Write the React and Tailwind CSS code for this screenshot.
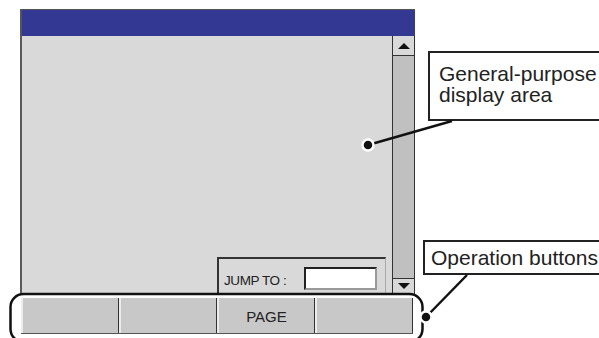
import React from 'react';

const Tri = ({ down }) => (
  <svg width="14" height="8" viewBox="0 0 14 8">
    <polygon points={down ? '1,1 13,1 7,7' : '1,7 13,7 7,1'} fill="#111" />
  </svg>
);

export default function App() {
  const buttons = ['', '', 'PAGE', ''];

  return (
    <div className="relative w-[599px] h-[338px] bg-white overflow-hidden font-['Liberation_Sans',Arial,sans-serif] text-[#222]">
      <div className="pt-[9px] pl-[20px]">
        {/* screen window */}
        <div className="w-[395px]">
          <div className="h-[27px] bg-[#333893] border-t border-l-2 border-[#555]" />
          <div className="flex h-[258px]">
            <div className="flex-1 bg-[#d9d9d9] border-l-2 border-[#5a5a5a] flex flex-col justify-end items-end pr-[6px]">
              <div className="w-[169px] h-[37px] border-t-2 border-l-2 border-r border-t-[#333] border-l-[#333] border-r-[#aaa] flex items-start pt-[8px] pl-[5px]">
                <span className="text-[13.5px] leading-none mt-[7px] tracking-[-0.4px] w-[80px]">JUMP TO :</span>
                <div className="w-[73px] h-[23px] bg-white border-2 border-t-[#222] border-l-[#222] border-r-[#999] border-b-[#999]" />
              </div>
            </div>
            <div className="w-[23px] flex flex-col border-l border-r border-[#333]">
              <div className="h-[20px] bg-[#d9d9d9] border-b border-[#333] flex items-center justify-center">
                <Tri />
              </div>
              <div className="flex-1 bg-[#c0c0c0]" />
              <div className="h-[16px] bg-[#d9d9d9] border-t border-[#333] flex items-start justify-center pt-[3px]">
                <Tri down />
              </div>
            </div>
          </div>
        </div>
        {/* operation buttons */}
        <div className="ml-[1px] mt-[4px] w-[392px] h-[36px] flex border-b border-[#555]">
          {buttons.map((b, i) => (
            <div
              key={i}
              className="flex-1 bg-[#c8c8c8] border-l-2 border-l-[#ececec] border-r border-r-[#333] flex items-center justify-center pt-[3px] text-[15px]"
            >
              {b}
            </div>
          ))}
        </div>
      </div>

      {/* callouts */}
      <div className="absolute left-[428px] top-[51px] w-[190px] h-[70px] border-2 border-[#222] bg-white pl-[9px] pt-[10px] text-[21px] leading-[21px]">
        General-purpose<br />display area
      </div>
      <div className="absolute left-[423px] top-[240px] w-[200px] h-[35px] border-2 border-[#222] bg-white pl-[6px] pt-[5px] text-[21px] leading-[21px]">
        Operation buttons
      </div>

      <svg className="absolute inset-0 pointer-events-none" width="599" height="338">
        <rect x="10.5" y="294" width="412" height="48" rx="13" fill="none" stroke="#111" strokeWidth="2.5" />
        <line x1="452" y1="121" x2="368" y2="145" stroke="#111" strokeWidth="2.5" />
        <circle cx="368" cy="145" r="5.5" fill="#111" stroke="#fff" strokeWidth="2.5" />
        <line x1="467" y1="275" x2="426" y2="317" stroke="#111" strokeWidth="2.5" />
        <circle cx="426" cy="317" r="5.5" fill="#111" stroke="#fff" strokeWidth="2.5" />
      </svg>
    </div>
  );
}
